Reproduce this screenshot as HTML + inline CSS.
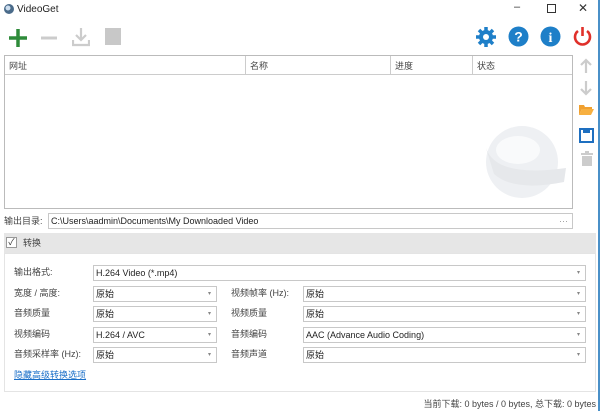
<!DOCTYPE html>
<html><head><meta charset="utf-8"><style>
*{box-sizing:border-box;margin:0;padding:0}
body{width:600px;height:411px;background:#fff;font-family:"Liberation Sans","Noto Sans CJK SC",sans-serif;font-size:9px;color:#333;position:relative;overflow:hidden}
.a{position:absolute}
.inp{position:absolute;background:#fff;border:1px solid #c8c8c8;height:16px;line-height:14px;padding-left:2px;font-size:9px;color:#222}
.dd::after{content:"▾";position:absolute;right:5px;top:0;font-size:6px;color:#888}
.lbl{position:absolute;font-size:9px;color:#444;line-height:16px}
</style></head><body>
<svg class="a" style="left:3px;top:3px" width="12" height="12"><circle cx="6" cy="6" r="5" fill="#4a6b8a"/><circle cx="5" cy="5" r="2.5" fill="#cde"/></svg>
<div class="a" style="left:17px;top:4px;font-size:10px;color:#222">VideoGet</div>
<div class="a" style="left:514px;top:1px;font-size:11px;color:#333">–</div>
<div class="a" style="left:547px;top:4px;width:9px;height:9px;border:1px solid #333"></div>
<div class="a" style="left:578px;top:1px;font-size:12px;color:#333">✕</div>
<svg class="a" style="left:8px;top:28px" width="20" height="20"><path d="M10 1v18M1 10h18" stroke="#2e8b3a" stroke-width="3.5"/></svg>
<svg class="a" style="left:40px;top:28px" width="18" height="20"><path d="M1 10h16" stroke="#ccc" stroke-width="3"/></svg>
<svg class="a" style="left:72px;top:27px" width="18" height="20"><path d="M9 1v12M4 8l5 5 5-5M1 13v5h16v-5" stroke="#ccc" stroke-width="2.2" fill="none"/></svg>
<div class="a" style="left:105px;top:28px;width:16px;height:17px;background:#c8c8c8"></div>
<svg class="a" style="left:476px;top:27px" width="20" height="20" viewBox="0 0 20 20"><g fill="#1e7fc8"><circle cx="10" cy="10" r="7"/><g stroke="#1e7fc8" stroke-width="3.5"><path d="M10 0v20M0 10h20M3 3l14 14M17 3L3 17"/></g></g><circle cx="10" cy="10" r="3" fill="#fff"/></svg>
<svg class="a" style="left:508px;top:26px" width="21" height="21"><circle cx="10.5" cy="10.5" r="10" fill="#1e7fc8"/><text x="10.5" y="15.5" text-anchor="middle" font-size="14" font-weight="bold" fill="#fff" font-family="Liberation Sans">?</text></svg>
<svg class="a" style="left:540px;top:26px" width="21" height="21"><circle cx="10.5" cy="10.5" r="10" fill="#1e7fc8"/><text x="10.5" y="16" text-anchor="middle" font-size="14" font-weight="bold" fill="#fff" font-family="Liberation Serif">i</text></svg>
<svg class="a" style="left:572px;top:26px" width="21" height="21"><path d="M6 5A7.5 7.5 0 1 0 15 5" stroke="#e0302a" stroke-width="2.6" fill="none"/><path d="M10.5 1v9" stroke="#e0302a" stroke-width="2.6"/></svg>
<div class="a" style="left:4px;top:55px;width:569px;height:154px;background:#fff;border:1px solid #bbb"></div>
<div class="a" style="left:5px;top:56px;width:567px;height:19px;border-bottom:1px solid #ccc"></div>
<div class="a" style="left:245px;top:56px;width:1px;height:19px;background:#ccc"></div>
<div class="a" style="left:390px;top:56px;width:1px;height:19px;background:#ccc"></div>
<div class="a" style="left:472px;top:56px;width:1px;height:19px;background:#ccc"></div>
<div class="lbl" style="left:9px;top:58px">网址</div>
<div class="lbl" style="left:250px;top:58px">名称</div>
<div class="lbl" style="left:395px;top:58px">进度</div>
<div class="lbl" style="left:477px;top:58px">状态</div>
<svg class="a" style="left:480px;top:120px" width="92" height="88"><circle cx="42" cy="42" r="36" fill="#eef0f3"/><ellipse cx="38" cy="30" rx="22" ry="14" fill="#f9fafb"/><path d="M6 28q10 30 80 20l-2 14q-50 10-70 -8z" fill="#e6e8eb"/></svg>
<svg class="a" style="left:580px;top:58px" width="12" height="16"><path d="M6 15V2M1 7l5-5 5 5" stroke="#ccc" stroke-width="2.2" fill="none"/></svg>
<svg class="a" style="left:580px;top:80px" width="12" height="16"><path d="M6 1v13M1 9l5 5 5-5" stroke="#ccc" stroke-width="2.2" fill="none"/></svg>
<svg class="a" style="left:579px;top:104px" width="15" height="12"><path d="M0 1h5l1 2h7v2H3L0 11z" fill="#f0a030"/><path d="M3 5h12l-3 6H0z" fill="#f7b040"/></svg>
<svg class="a" style="left:579px;top:128px" width="15" height="15"><rect x="1" y="1" width="13" height="13" fill="none" stroke="#1e6fc0" stroke-width="2"/><rect x="4" y="1" width="7" height="4" fill="#1e6fc0"/></svg>
<svg class="a" style="left:581px;top:151px" width="12" height="15"><rect x="0" y="2" width="12" height="2" fill="#ccc"/><rect x="4" y="0" width="4" height="2" fill="#ccc"/><rect x="1" y="5" width="10" height="10" fill="#ccc"/></svg>
<div class="lbl" style="left:4px;top:213px">输出目录:</div>
<div class="inp" style="left:48px;top:213px;width:525px">C:\Users\aadmin\Documents\My Downloaded Video<span style="position:absolute;right:4px;color:#999">···</span></div>
<div class="a" style="left:4px;top:233px;width:592px;height:20px;background:#e6e6e6"></div>
<div class="a" style="left:6px;top:237px;width:11px;height:11px;background:#fff;border:1px solid #999;font-size:9px;line-height:9px;text-align:center">✓</div>
<div class="lbl" style="left:23px;top:235px">转换</div>
<div class="a" style="left:4px;top:253px;width:592px;height:139px;background:#fff;border:1px solid #e4e4e4"></div>
<div class="lbl" style="left:14px;top:264px">输出格式:</div>
<div class="inp dd" style="left:93px;top:265px;width:493px">H.264 Video (*.mp4)</div>
<div class="lbl" style="left:14px;top:285px">宽度 / 高度:</div>
<div class="inp dd" style="left:93px;top:286px;width:124px">原始</div>
<div class="lbl" style="left:231px;top:285px">视频帧率 (Hz):</div>
<div class="inp dd" style="left:303px;top:286px;width:283px">原始</div>
<div class="lbl" style="left:14px;top:305px">音频质量</div>
<div class="inp dd" style="left:93px;top:306px;width:124px">原始</div>
<div class="lbl" style="left:231px;top:305px">视频质量</div>
<div class="inp dd" style="left:303px;top:306px;width:283px">原始</div>
<div class="lbl" style="left:14px;top:326px">视频编码</div>
<div class="inp dd" style="left:93px;top:327px;width:124px">H.264 / AVC</div>
<div class="lbl" style="left:231px;top:326px">音频编码</div>
<div class="inp dd" style="left:303px;top:327px;width:283px">AAC (Advance Audio Coding)</div>
<div class="lbl" style="left:14px;top:346px">音频采样率 (Hz):</div>
<div class="inp dd" style="left:93px;top:347px;width:124px">原始</div>
<div class="lbl" style="left:231px;top:346px">音频声道</div>
<div class="inp dd" style="left:303px;top:347px;width:283px">原始</div>
<div class="lbl" style="left:14px;top:367px;color:#1a6fc8;text-decoration:underline">隐藏高级转换选项</div>
<div class="lbl" style="right:4px;top:396px;color:#444">当前下载: 0 bytes / 0 bytes, 总下载: 0 bytes</div>
<div class="a" style="left:598px;top:0;width:2px;height:411px;background:#4a90c8"></div>
</body></html>
